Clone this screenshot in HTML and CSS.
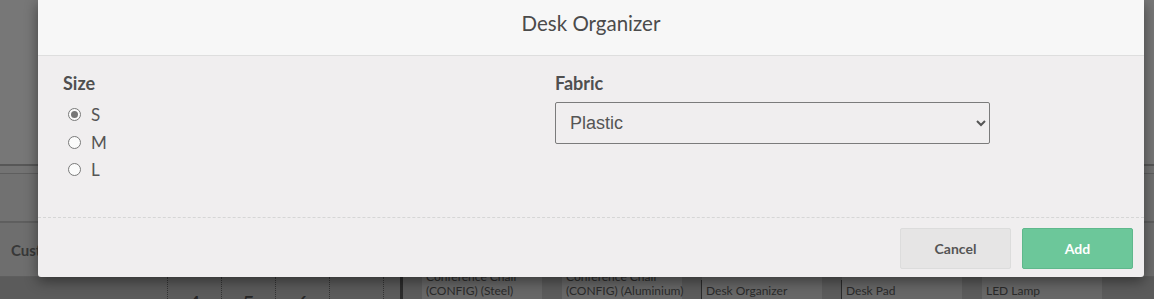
FILE: index.html
```html
<!DOCTYPE html>
<html lang="en">
<head>
    <meta charset="UTF-8">
    <meta name="viewport" content="width=device-width, initial-scale=1.0">
    <title>Desk Organizer</title>
    <link rel="stylesheet" href="styles.css">
</head>
<body>
    <!-- page behind the dialog, dimmed -->
    <div class="backdrop">
        <div class="bd-top"></div>
        <div class="bd-rule"></div>
        <div class="bd-row bd-row-a"></div>
        <div class="bd-row bd-row-b"></div>
        <div class="bd-row bd-row-c"><span class="bd-cust">Customer</span></div>
        <div class="bd-products">
            <div class="keypad">
                <span class="key">4</span>
                <span class="key">5</span>
                <span class="key">6</span>
                <span class="key"></span>
                <span class="key key-end"></span>
            </div>
            <div class="product product-first"><span>Conference Chair</span>(CONFIG) (Steel)</div>
            <div class="product"><span>Conference Chair</span>(CONFIG) (Aluminium)</div>
            <div class="product product-line"><span>&nbsp;</span>Desk Organizer</div>
            <div class="product product-line"><span>&nbsp;</span>Desk Pad</div>
            <div class="product"><span>&nbsp;</span>LED Lamp</div>
        </div>
    </div>

    <div class="modal">
        <div class="modal-header">Desk Organizer</div>
        <div class="modal-body">
            <div class="field">
                <div class="field-label">Size</div>
                <label class="radio-row"><input type="radio" name="size" value="S" checked> S</label>
                <label class="radio-row"><input type="radio" name="size" value="M"> M</label>
                <label class="radio-row"><input type="radio" name="size" value="L"> L</label>
            </div>
            <div class="field">
                <div class="field-label">Fabric</div>
                <select class="select">
                    <option selected>Plastic</option>
                    <option>Wood</option>
                    <option>Metal</option>
                </select>
            </div>
        </div>
        <div class="modal-footer">
            <button type="button" class="btn btn-cancel">Cancel</button>
            <button type="button" class="btn btn-add">Add</button>
        </div>
    </div>
</body>
</html>
```

FILE: styles.css
```css
html, body {
    margin: 0;
    padding: 0;
    height: 100%;
    overflow: hidden;
}

body {
    font-family: Lato, "Open Sans", sans-serif;
    background: #717171;
    position: relative;
}

/* dimmed page */
.backdrop {
    height: 100%;
    display: flex;
    flex-direction: column;
}
.backdrop > div {
    flex-shrink: 0;
}
.bd-top {
    height: 164px;
    background: #777777;
}
.bd-rule {
    height: 2px;
    background: #575757;
}
.bd-row {
    box-sizing: border-box;
    border-bottom: 1px solid #5e5e5e;
}
.bd-row-a {
    height: 8px;
    background: #737373;
}
.bd-row-b {
    height: 48px;
    background: #717171;
}
.bd-row-c {
    height: 55px;
    background: #6e6e6e;
    border-top: 1px solid #5f5f5f;
    display: flex;
    align-items: center;
    padding: 0 0 0 11px;
}
.bd-cust {
    font-weight: bold;
    font-size: 15px;
    color: #383838;
}
.bd-products {
    height: 60px;
    display: flex;
    background: #5b5b5b;
    padding-left: 167px;
}
.keypad {
    display: flex;
    border-right: 3px solid #2c2c2c;
}
.key {
    width: 53px;
    border-left: 1px dotted #333333;
    text-align: center;
    font-size: 22px;
    line-height: 24px;
    color: #262626;
    padding-top: 14px;
}
.key-end {
    width: 16px;
}
.product {
    box-sizing: border-box;
    width: 120px;
    margin-right: 20px;
    padding: 0 0 0 4px;
    font-size: 12px;
    line-height: 14px;
    color: #2a2a2a;
    background: #676767;
    display: flex;
    flex-direction: column;
    white-space: nowrap;
}
.product-first {
    margin-left: 19px;
}
.product span {
    margin-top: -7px;
}
.product-line {
    box-shadow: -4px 0 0 -3px #2a2a2a;
}

/* dialog */
.modal {
    position: absolute;
    left: 38px;
    top: 0;
    width: 1106px;
    background: #f0eeef;
    border-radius: 0 0 3px 3px;
    box-shadow: 0 4px 14px rgba(0, 0, 0, 0.45);
}
.modal-header {
    height: 56px;
    box-sizing: border-box;
    padding-top: 9px;
    line-height: 28px;
    text-align: center;
    font-size: 20.5px;
    color: #4b4b4b;
    background: #f7f7f7;
    border-bottom: 1px solid #dedede;
}
.modal-body {
    height: 161px;
    box-sizing: border-box;
    padding: 16px 0 0 25px;
    display: grid;
    grid-template-columns: 492px 435px;
}
.field-label {
    font-size: 18px;
    font-weight: bold;
    line-height: 22px;
    color: #4f4f4f;
    margin-bottom: 7px;
}
.radio-row {
    display: flex;
    align-items: center;
    height: 27.5px;
    font-size: 17px;
    color: #555555;
    padding-left: 5px;
}
.radio-row input {
    appearance: none;
    box-sizing: border-box;
    width: 13px;
    height: 13px;
    margin: 0 10px 0 0;
    border: 1px solid #7a7a7a;
    border-radius: 50%;
    background: #fbfbfb;
    position: relative;
}
.radio-row input:checked::after {
    content: "";
    position: absolute;
    left: 2px;
    top: 2px;
    width: 7px;
    height: 7px;
    border-radius: 50%;
    background: #777777;
}
.select {
    display: block;
    width: 435px;
    height: 42px;
    margin-top: 8px;
    padding: 0 10px;
    font-family: "Liberation Sans", Arial, sans-serif;
    font-size: 18px;
    color: #555555;
    background: #f0eeef;
    border: 1px solid #7b7b7b;
    border-radius: 2px;
}

.modal-footer {
    border-top: 1px dashed #d6d6d6;
    display: flex;
    justify-content: flex-end;
    gap: 11px;
    padding: 10px 11px 8px 0;
}
.btn {
    width: 111px;
    height: 41px;
    font-family: Lato, sans-serif;
    font-size: 14px;
    font-weight: bold;
    border-radius: 2px;
    cursor: pointer;
}
.btn-cancel {
    background: #e6e5e5;
    color: #555555;
    border: 1px solid #dcdcdc;
}
.btn-add {
    background: #6cc79a;
    color: #ffffff;
    border: 1px solid #5fb88c;
}
```
